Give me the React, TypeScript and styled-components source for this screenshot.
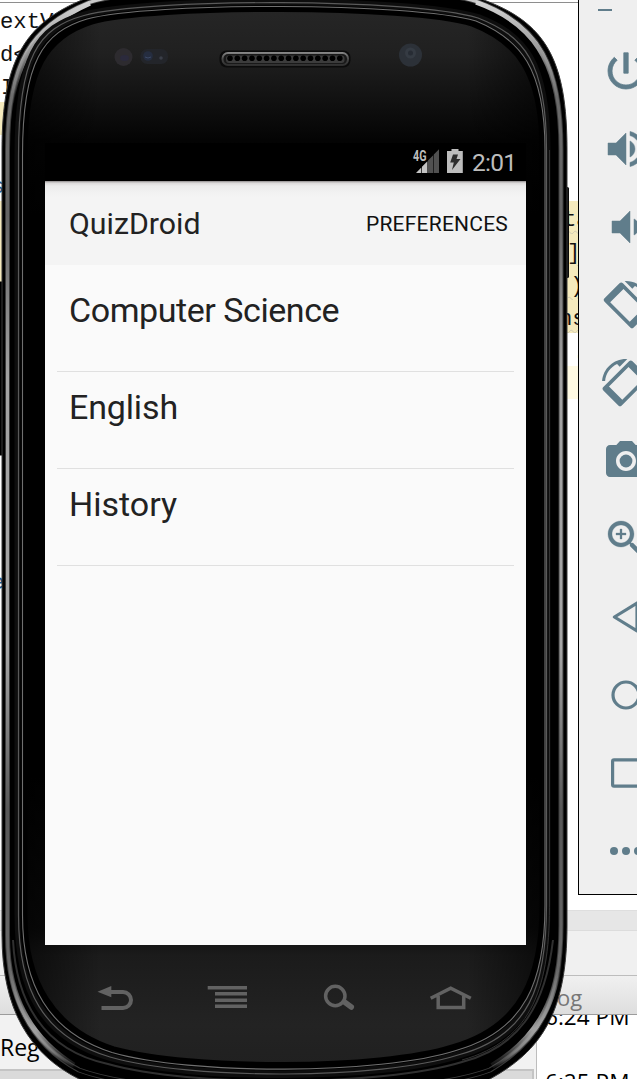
import React from "react";
import styled, { createGlobalStyle } from "styled-components";

const GlobalStyle = createGlobalStyle`
  * { box-sizing: border-box; }
  html, body { margin: 0; padding: 0; background: #fff; overflow: hidden; }
`;

const Desktop = styled.main`
  position: relative;
  width: 637px;
  height: 1079px;
  overflow: hidden;
  background: #fff;
`;

/* ---------- IDE behind the emulator ---------- */

const Ide = styled.section`
  display: flex;
  flex-direction: column;
  height: 1079px;
`;

const Editor = styled.div`
  flex: none;
  height: 910px;
  padding-top: 2px;
  overflow: hidden;
  background: #fff;
`;

const EditorCode = styled.div`
  border-top: 1px solid #8e8e8e;
`;

const CodeRow = styled.div<{ $tone: string; $short?: boolean }>`
  display: flex;
  width: ${(p) => (p.$short ? "300px" : "100%")};
  height: 33px;
  line-height: 39px;
  overflow: hidden;
  background: ${(p) => p.$tone};
  font-family: "Liberation Mono", monospace;
  font-size: 22.2px;
  color: #111;
  white-space: pre;
`;

const CodeStart = styled.span<{ $shift: number; $ink?: string }>`
  flex: none;
  width: 558px;
  text-indent: ${(p) => p.$shift}px;
  color: ${(p) => p.$ink ?? "#111"};
`;

const CodeEnd = styled.span<{ $shift: number; $wavy?: boolean }>`
  text-indent: ${(p) => p.$shift}px;
  text-decoration: ${(p) => (p.$wavy ? "underline wavy #cfcab4 1px" : "none")};
  text-underline-offset: 4px;
`;

const Splitter = styled.div`
  flex: none;
  height: 21px;
  background: #e6e6e6;
  border-top: 1px solid #dedede;
  border-bottom: 1px solid #dcdcdc;
`;

const ToolStrip = styled.div`
  flex: none;
  height: 44px;
  background: #f0f0f0;
`;

const LogHeader = styled.div`
  flex: none;
  height: 40px;
  padding-left: 557px;
  border-top: 1px solid #bdbdbd;
  border-bottom: 1px solid #9c9c9c;
  background: linear-gradient(#f0f0f0, #dedede);
  font: 22px/42px "Open Sans", sans-serif;
  color: #777;
`;

const LogBody = styled.div`
  flex: 1;
  display: flex;
  min-height: 0;
  font: 22.6px/30px "Open Sans", sans-serif;
  color: #000;
`;

const RegisterPane = styled.div`
  display: flex;
  flex-direction: column;
  justify-content: space-between;
  width: 537px;
  padding-top: 17px;
  background: #f2f2f2;
  border-right: 1px solid #bdbdbd;
`;

const RegisterLabel = styled.span`
  padding-left: 0;
  font-size: 23px;
`;

const PaneFooter = styled.div`
  flex: none;
  height: 10px;
  margin-right: 2px;
  border: solid #c4c4c4;
  border-width: 2px 2px 0 0;
  background: #dadada;
`;

const Times = styled.div`
  display: flex;
  flex-direction: column;
  gap: 35px;
  height: 65px;
  padding-left: 8px;
  overflow: hidden;
  white-space: nowrap;
`;

const TimeStamp = styled.span`
  flex: none;
  margin-top: -13px;
  height: 43px;
`;

/* ---------- Phone ---------- */

const Phone = styled.section`
  position: absolute;
  inset: 0;
  display: flex;
  flex-direction: column;
  width: 570px;
  padding: 143px 0 0 45px;
`;

const Shell = styled.svg`
  position: absolute;
  left: 0;
  top: 0;
`;

const Screen = styled.div`
  position: relative;
  flex: none;
  display: flex;
  flex-direction: column;
  width: 481px;
  height: 802px;
  background: #fafafa;
  font-family: Roboto, sans-serif;
  color: #222;
`;

const StatusBar = styled.div`
  flex: none;
  display: flex;
  align-items: center;
  height: 38px;
  padding-left: 367px;
  background: #000;
`;

const Clock = styled.span`
  margin-left: 7px;
  padding-top: 2px;
  font-size: 24.5px;
  line-height: 36px;
  letter-spacing: -0.7px;
  color: #bdbdbd;
`;

const AppBar = styled.header`
  flex: none;
  display: flex;
  align-items: center;
  justify-content: space-between;
  height: 84px;
  padding: 1px 18px 0 24px;
  background: linear-gradient(#8f8b8c 0, #dcdada 2px, #ececec 5px, #f1f1f1 11px, #f4f4f4 16px);
`;

const Title = styled.h1`
  margin: 0;
  font-size: 30.3px;
  font-weight: 400;
  line-height: 36px;
`;

const MenuAction = styled.span`
  font-size: 21px;
  line-height: 28px;
  letter-spacing: 0.22px;
  color: #111;
`;

const Topics = styled.ul`
  margin: 0;
  padding: 10px 12px 0;
  list-style: none;
`;

const Topic = styled.li<{ $tracking: number }>`
  height: 97px;
  padding: 14px 12px 0;
  border-bottom: 1px solid #e0e0e0;
  font-size: 34px;
  line-height: 42px;
  letter-spacing: ${(p) => p.$tracking}px;
`;

const NavKeys = styled.nav`
  position: relative;
  display: flex;
  gap: 68px;
  padding: 38px 0 0 48px;
`;

const NavIcon = styled.svg`
  flex: none;
  width: 44px;
  height: 30px;
  fill: none;
  stroke: #626262;
`;

/* ---------- Emulator toolbar ---------- */

const Toolbar = styled.aside`
  position: absolute;
  left: 578px;
  top: 0;
  display: flex;
  flex-direction: column;
  width: 80px;
  height: 895px;
  padding-left: 19px;
  border-left: 1px solid #000;
  border-bottom: 1px solid #000;
  background: #efefef;
`;

const Minimize = styled.div`
  flex: none;
  width: 14px;
  height: 2px;
  margin: 9px 0 36px 0;
  background: #607d8b;
`;

const ToolList = styled.div`
  display: flex;
  flex-direction: column;
  gap: 30px;
  padding-left: 4px;
`;

const ToolIcon = styled.svg`
  flex: none;
  width: 48px;
  height: 48px;
  fill: #607d8b;
`;

const BAND = "#f5eabd";
const CARET = "#fffae3";

type Line = {
  start?: string;
  startShift?: number;
  ink?: string;
  end?: string;
  endShift?: number;
  tone?: string;
  short?: boolean;
};

const lines: Line[] = [
  { start: "extV" },
  { start: "d<" },
  { start: "I", startShift: 1 },
  { tone: BAND, short: true },
  {},
  { start: "s", startShift: -9, ink: "#1a5f96" },
  { tone: BAND, end: "ta", endShift: 5 },
  { tone: BAND, end: "]", endShift: 9 },
  { tone: BAND, end: "()", endShift: -1 },
  { tone: BAND, end: "ns", endShift: 1 },
  { end: ".", endShift: 15 },
  { tone: CARET },
  {},
  {},
  {},
  {},
  {},
  { start: "e", startShift: -9, ink: "#1a5f96" },
];

const topics = [
  { name: "Computer Science", tracking: -0.44 },
  { name: "English", tracking: -0.15 },
  { name: "History", tracking: 0 },
];

const ROTATE_ARC =
  "M16.48 2.52c3.27 1.55 5.61 4.72 5.97 8.48h1.5C23.44 4.84 18.29 0 12 0l-.66.03 3.81 3.81 1.33-1.32z";

function RotateDevice() {
  return (
    <>
      <path d={ROTATE_ARC} />
      <g transform="translate(12.3 12.2) rotate(-45)">
        <path
          fillRule="evenodd"
          d="M-5.3-10.3h10.600a1.200 1.200 0 0 1 1.200 1.200V9.100a1.200 1.200 0 0 1-1.200 1.200h-10.600a1.200 1.200 0 0 1-1.200-1.200V-9.100A1.200 1.200 0 0 1-5.300-10.300zM-4.700-6.900V6.900h9.400V-6.900z"
        />
      </g>
    </>
  );
}

const toolIcons: React.ReactNode[] = [
  <path
    stroke="#607d8b"
    strokeWidth="0.400"
    d="M13.100 2.900h-2.200v10.200h2.200V2.900zm4.730 2.270-1.420 1.420C17.990 7.860 19 9.810 19 12c0 3.870-3.130 7-7 7s-7-3.130-7-7c0-2.190 1.010-4.140 2.580-5.420L6.170 5.170C4.230 6.820 3 9.260 3 12c0 4.970 4.030 9 9 9s9-4.030 9-9c0-2.740-1.230-5.180-3.170-6.830z"
  />,
  <path
    stroke="#607d8b"
    strokeWidth="0.250"
    d="M3 9v6h4l5 5V4L7 9H3zm13.500 3c0-1.770-1.020-3.290-2.500-4.030v8.050c1.480-.73 2.500-2.250 2.500-4.020zM14 3.230v2.060c2.890.86 5 3.540 5 6.710s-2.110 5.850-5 6.710v2.060c4.010-.91 7-4.490 7-8.770s-2.990-7.860-7-8.770z"
  />,
  <path
    stroke="#607d8b"
    strokeWidth="0.250"
    d="M18.500 12c0-1.770-1.020-3.290-2.500-4.030v8.050c1.480-.73 2.500-2.250 2.500-4.020zM5 9v6h4l5 5V4L9 9H5z"
  />,
  <RotateDevice />,
  <g transform="translate(24 0) scale(-1 1)">
    <RotateDevice />
  </g>,
  <>
    <circle cx="12" cy="12" r="3.200" />
    <path d="M9 2L7.170 4H4c-1.100 0-2 .9-2 2v12c0 1.100.9 2 2 2h16c1.100 0 2-.9 2-2V6c0-1.100-.9-2-2-2h-3.170L15 2H9zm3 15c-2.760 0-5-2.240-5-5s2.240-5 5-5 5 2.240 5 5-2.240 5-5 5z" />
  </>,
  <path d="M15.500 14h-.79l-.28-.27C15.410 12.590 16 11.110 16 9.500 16 5.910 13.090 3 9.500 3S3 5.910 3 9.500 5.910 16 9.500 16c1.610 0 3.090-.59 4.230-1.570l.27.28v.79l5 4.990L20.490 19l-4.990-5zm-6 0C7.010 14 5 11.990 5 9.500S7.010 5 9.500 5 14 7.010 14 9.500 11.990 14 9.500 14zM12 10h-2v2H9v-2H7V9h2V7h1v2h2z" stroke="#607d8b" strokeWidth="0.150" />,
  <path d="M6.200 12 17.500 5V19z" fill="none" stroke="#607d8b" strokeWidth="1.600" strokeLinejoin="round" />,
  <circle cx="12" cy="12" r="6.500" fill="none" stroke="#607d8b" strokeWidth="1.600" />,
  <rect x="5.300" y="5.400" width="13.400" height="13.200" rx="0.700" fill="none" stroke="#607d8b" strokeWidth="1.600" />,
  <>
    <circle cx="6" cy="12" r="2" />
    <circle cx="12" cy="12" r="2" />
    <circle cx="18" cy="12" r="2" />
  </>,
];

const OUTER =
  "M2 150C2 60 25 22 87-2C150-22 420-22 481-1C546 22 567 60 567 150V925C567 1012 542 1051 488 1080C410 1112 160 1112 81 1080C28 1054 2 1008 2 935Z";
const RIM =
  "M7.500 150C7.500 62 31 26 89 2.500C150-18 420-18 478 2C540 25 561 66 561 150V925C561 1004 538 1042 490 1070C410 1100 160 1100 79 1070C32 1045 7.500 1000 7.500 935Z";
const LINE_A =
  "M18.500 155C18.500 57 38 28 84 15.500C150-2 410-2 478 18C524 36 546.500 62 546.500 150V905C546.500 985 530 1036 458 1055C380 1080 190 1080 110 1057C43 1037 18.500 990 18.500 915Z";
const LINE_B =
  "M22.500 155C22.500 62 43 32 87 19C150 2 410 2 476 21C520 39 545 68 545 150V905C545 980 526 1031 456 1050.500C380 1075 190 1075 112 1052.500C48 1032 22.500 985 22.500 915Z";
const FACE =
  "M26 155C26 68 48 37 92 23C150 6 410 6 472 25C516 42 541 72 541 150V905C541 975 522 1026 452 1046C380 1069 190 1069 114 1048C53 1028 26 980 26 915Z";

const holes = Array.from({ length: 16 }, (_, i) => 230 + i * 7.32);

function PhoneShell() {
  return (
    <Shell width="570" height="1079" viewBox="0 0 570 1079" fill="none">
      <defs>
        <linearGradient id="face" x1="0" y1="0" x2="0" y2="1079" gradientUnits="userSpaceOnUse">
          <stop offset="0" stopColor="#272727" />
          <stop offset="0.050" stopColor="#202020" />
          <stop offset="0.085" stopColor="#141414" />
          <stop offset="0.130" stopColor="#040404" />
          <stop offset="0.200" stopColor="#000" />
          <stop offset="0.720" stopColor="#000" />
          <stop offset="0.860" stopColor="#0c0c0c" />
          <stop offset="0.885" stopColor="#1b1b1b" />
          <stop offset="0.950" stopColor="#232323" />
          <stop offset="1" stopColor="#1f1f1f" />
        </linearGradient>
        <linearGradient id="faceSides" x1="22" y1="0" x2="545" y2="0" gradientUnits="userSpaceOnUse">
          <stop offset="0" stopColor="#000" stopOpacity="0.600" />
          <stop offset="0.150" stopColor="#000" stopOpacity="0" />
          <stop offset="0.850" stopColor="#000" stopOpacity="0" />
          <stop offset="1" stopColor="#000" stopOpacity="0.600" />
        </linearGradient>
        <linearGradient id="rim" x1="0" y1="0" x2="0" y2="1079" gradientUnits="userSpaceOnUse">
          <stop offset="0" stopColor="#c9c9c9" />
          <stop offset="0.040" stopColor="#b5b5b5" />
          <stop offset="0.090" stopColor="#6b6b6b" />
          <stop offset="0.200" stopColor="#646464" />
          <stop offset="0.350" stopColor="#a3a3a3" />
          <stop offset="0.600" stopColor="#a6a6a6" />
          <stop offset="0.750" stopColor="#585858" />
          <stop offset="0.900" stopColor="#686868" />
          <stop offset="0.950" stopColor="#a0a0a0" />
          <stop offset="0.975" stopColor="#666" />
          <stop offset="0.990" stopColor="#000" />
        </linearGradient>
        <linearGradient id="gleamTop" x1="0" y1="0" x2="0" y2="110" gradientUnits="userSpaceOnUse">
          <stop offset="0" stopColor="#d6d6d6" />
          <stop offset="0.450" stopColor="#9a9a9a" />
          <stop offset="1" stopColor="#666" stopOpacity="0" />
        </linearGradient>
        <linearGradient id="gleamBottom" x1="0" y1="960" x2="0" y2="1066" gradientUnits="userSpaceOnUse">
          <stop offset="0" stopColor="#666" stopOpacity="0" />
          <stop offset="0.650" stopColor="#a2a2a2" />
          <stop offset="1" stopColor="#888" stopOpacity="0.100" />
        </linearGradient>
        <linearGradient id="grille" x1="0" y1="52" x2="0" y2="67" gradientUnits="userSpaceOnUse">
          <stop offset="0" stopColor="#8a8a8a" />
          <stop offset="0.500" stopColor="#444" />
          <stop offset="1" stopColor="#2a2a2a" />
        </linearGradient>
      </defs>
      <rect x="-4" y="281.500" width="9" height="174" rx="2" fill="#000" />
      <rect x="560" y="187" width="9" height="91" rx="1.500" fill="#0a0a0a" />
      <path d={OUTER} fill="#000" />
      <path d={OUTER} stroke="#3a3a3a" strokeWidth="1" />
      <path d={RIM} stroke="#3c3c3c" strokeWidth="5" />
      <path d={RIM} stroke="url(#rim)" strokeWidth="3" />
      <path d="M8.500 130C13 60 37 27 90 3.500" stroke="url(#gleamTop)" strokeWidth="4.500" />
      <path d="M476 2.500C534 23 557 62 560.500 130" stroke="url(#gleamTop)" strokeWidth="4.500" />
      <path d="M560 955C556 1005 534 1041 492 1066" stroke="url(#gleamBottom)" strokeWidth="6" />
      <path d="M8.500 955C12 1002 34 1040 74 1065" stroke="url(#gleamBottom)" strokeWidth="5" />
      <path d={LINE_A} stroke="#0e0e0e" strokeWidth="8" />
      <path d={LINE_A} stroke="#5a5a5a" strokeWidth="1.200" />
      <path d={LINE_B} stroke="#000" strokeWidth="2.500" transform="translate(-1 0)" />
      <path d={LINE_B} stroke="#707070" strokeWidth="1.100" />
      <path d="M549.500 150V900C550 985 534 1040 462 1060" stroke="#333" />
      <path d="M13 940C16 1000 42 1050 108 1064C190 1087 380 1087 462 1062C516 1048 545 1010 553 940" stroke="#303030" strokeWidth="2" />
      <path d={FACE} fill="url(#face)" stroke="#000" strokeWidth="3" />
      <path d={FACE} fill="url(#faceSides)" />
      <circle cx="123.500" cy="57" r="9" fill="#2d2b2f" />
      <ellipse cx="124.500" cy="58" rx="4.500" ry="3" fill="#2b2a3c" />
      <rect x="140.500" y="49" width="27.500" height="15" rx="6.500" fill="#23252a" />
      <circle cx="148" cy="56" r="4.800" fill="#252d40" />
      <path d="M145 57q3 2 6 0" stroke="#3c4966" />
      <circle cx="161" cy="58" r="1.800" fill="#3a3e48" />
      <circle cx="410.500" cy="55" r="11.500" fill="#2c3138" />
      <circle cx="410.500" cy="53" r="5.500" fill="#353b43" />
      <circle cx="410.500" cy="53" r="2.500" fill="#272c34" />
      <rect x="219.500" y="50.500" width="131" height="17" rx="7" fill="#0b0b0b" />
      <rect x="222.500" y="53" width="125.500" height="12" rx="5.500" fill="#191919" stroke="url(#grille)" strokeWidth="2" />
      <rect x="226" y="55.500" width="118.500" height="7.500" rx="3" fill="#3c3c3c" />
      {holes.map((x) => (
        <circle key={x} cx={x} cy="58.300" r="2.800" fill="#000" />
      ))}
    </Shell>
  );
}

function StatusIcons() {
  return (
    <svg width="53" height="38" viewBox="412 143 53 38">
      <path d="M416 173L421.300 167.500V173zM422 173V166.700L427.400 161.200V173z" fill="#c4c4c4" />
      <path d="M428 173V160.500L433.200 155.200V173zM433.800 173V154.500L439 149.200V173z" fill="#505050" />
      <text
        x="413"
        y="160.700"
        textLength="13.500"
        lengthAdjust="spacingAndGlyphs"
        fontFamily="Roboto, sans-serif"
        fontSize="14.500"
        fontWeight="700"
        fill="#bdbdbd"
      >
        4G
      </text>
      <path d="M451.500 149h7v2h4.300v22H447v-22h4.500z" fill="#bdbdbd" />
      <path d="M453 154.500h5l-1.500 4.500h4L452 170l1.800-7.500h-3.600z" fill="#2c2c2c" />
    </svg>
  );
}

export default function App() {
  return (
    <Desktop>
      <GlobalStyle />
      <Ide>
        <Editor>
          <EditorCode>
            {lines.map((l, i) => (
              <CodeRow key={i} $tone={l.tone ?? "#fff"} $short={l.short}>
                <CodeStart $shift={l.startShift ?? 0} $ink={l.ink}>
                  {l.start}
                </CodeStart>
                <CodeEnd $shift={l.endShift ?? 0} $wavy={l.tone === BAND}>
                  {l.end}
                </CodeEnd>
              </CodeRow>
            ))}
          </EditorCode>
        </Editor>
        <Splitter />
        <ToolStrip />
        <LogHeader>og</LogHeader>
        <LogBody>
          <RegisterPane>
            <RegisterLabel>Reg</RegisterLabel>
            <PaneFooter />
          </RegisterPane>
          <Times>
            <TimeStamp>6:24 PM</TimeStamp>
            <TimeStamp>6:25 PM</TimeStamp>
          </Times>
        </LogBody>
      </Ide>

      <Phone>
        <PhoneShell />
        <Screen>
          <StatusBar>
            <StatusIcons />
            <Clock>2:01</Clock>
          </StatusBar>
          <AppBar>
            <Title>QuizDroid</Title>
            <MenuAction>PREFERENCES</MenuAction>
          </AppBar>
          <Topics>
            {topics.map((t) => (
              <Topic key={t.name} $tracking={t.tracking}>
                {t.name}
              </Topic>
            ))}
          </Topics>
        </Screen>
        <NavKeys>
          <NavIcon viewBox="0 0 44 30">
            <path d="M17 9H30a8 8 0 0 1 0 16H8.500" strokeWidth="4" />
            <path d="M4.500 8.700L18.300 3V14.300z" fill="#626262" stroke="none" />
          </NavIcon>
          <NavIcon viewBox="0 0 44 30">
            <path d="M2.700 4.700H42M10 10.700H42M10 17.200H42M10 23.200H42" strokeWidth="3.500" />
          </NavIcon>
          <NavIcon viewBox="0 0 44 30">
            <circle cx="18.300" cy="13" r="9.700" strokeWidth="3.500" />
            <path d="M27.500 19L34.300 24" strokeWidth="5.500" strokeLinecap="round" />
          </NavIcon>
          <NavIcon viewBox="0 0 44 30">
            <path d="M1.700 15.200L21.700 5.200L41.800 15.200M9.200 13V24.500H34.700V13" strokeWidth="3.500" />
          </NavIcon>
        </NavKeys>
      </Phone>

      <Toolbar>
        <Minimize />
        <ToolList>
          {toolIcons.map((icon, i) => (
            <ToolIcon key={i} viewBox="0 0 24 24">
              {icon}
            </ToolIcon>
          ))}
        </ToolList>
      </Toolbar>
    </Desktop>
  );
}
